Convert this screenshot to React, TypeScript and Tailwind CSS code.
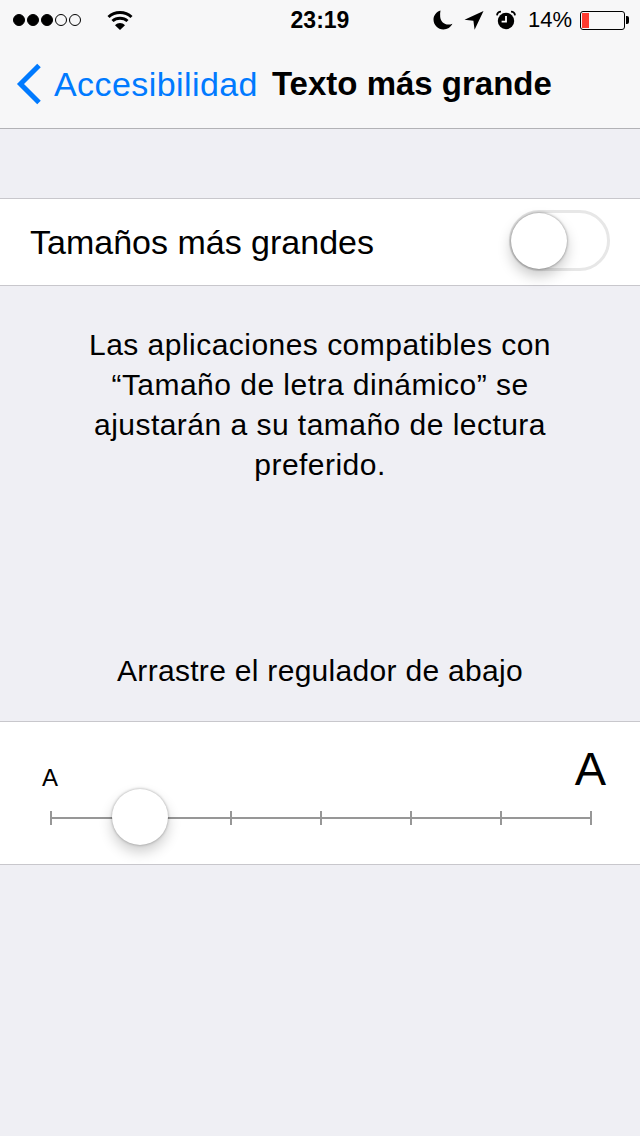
import React from 'react';

const ticks = [0, 1, 2, 3, 4, 5, 6];

function Signal() {
    return (
        <div className="flex items-center gap-[2px]">
            <span className="w-[12px] h-[12px] rounded-full bg-black border border-black" />
            <span className="w-[12px] h-[12px] rounded-full bg-black border border-black" />
            <span className="w-[12px] h-[12px] rounded-full bg-black border border-black" />
            <span className="w-[12px] h-[12px] rounded-full border border-black" />
            <span className="w-[12px] h-[12px] rounded-full border border-black" />
        </div>
    );
}

function Wifi() {
    return (
        <svg width="26" height="20" viewBox="0 0 26 20" fill="none">
            <path d="M1.5 7C7.8 1 18.2 1 24.5 7" stroke="#000" strokeWidth="3" />
            <path d="M5.5 11C9.6 7.2 16.4 7.2 20.5 11" stroke="#000" strokeWidth="3" />
            <path d="M8 15.2L13 20L18 15.2C15 12.4 11 12.4 8 15.2Z" fill="#000" />
        </svg>
    );
}

function Moon() {
    return (
        <svg width="20" height="20" viewBox="0 0 20 20">
            <path d="M7.5 0.5C3.5 1.8 0.5 5.2 0.5 9.6C0.5 15.2 5 19.5 10.4 19.5C14.4 19.5 17.8 17.2 19.4 13.8C18 14.4 16.6 14.6 15.4 14.6C11 14.6 7.6 11.4 7.2 7C7 4.6 7.1 2.4 7.5 0.5Z" fill="#000" />
        </svg>
    );
}

function LocationArrow() {
    return (
        <svg width="20" height="20" viewBox="0 0 20 20">
            <path d="M19.5 1L0.5 9.8L9.4 10.8L10.6 19.8Z" fill="#000" />
        </svg>
    );
}

function Alarm() {
    return (
        <svg width="20" height="20" viewBox="0 0 20 20">
            <circle cx="10" cy="11" r="8.2" fill="#000" />
            <path d="M10 6V11.6H5.6" stroke="#fff" strokeWidth="1.8" fill="none" />
            <path d="M1 5.4C1.2 3.2 3 1.6 5 1.6" stroke="#000" strokeWidth="1.8" fill="none" />
            <path d="M19 5.4C18.8 3.2 17 1.6 15 1.6" stroke="#000" strokeWidth="1.8" fill="none" />
        </svg>
    );
}

function Battery() {
    return (
        <div className="flex items-center">
            <div className="w-[45px] h-[19px] rounded-[3px] border border-black p-[1px] flex">
                <div className="w-[7px] bg-[#ff3b30]" />
            </div>
            <div className="w-[3px] h-[8px] ml-[1px] bg-black rounded-r-[2px]" />
        </div>
    );
}

export default function App() {
    return (
        <div
            className="w-[640px] h-[1136px] bg-[#efeff4] text-black overflow-hidden"
            style={{ fontFamily: '"Liberation Sans", Arial, sans-serif' }}
        >
            {/* Status bar + nav */}
            <header className="h-[129px] bg-[#f7f7f8] border-b border-[#b2b2b6]">
                <div className="relative h-[40px] flex items-center pl-[13px] pr-[11px]">
                    <Signal />
                    <div className="ml-[26px]">
                        <Wifi />
                    </div>
                    <div className="absolute left-0 right-0 text-center text-[23px] leading-[40px] font-bold">
                        23:19
                    </div>
                    <div className="ml-auto flex items-center">
                        <Moon />
                        <div className="ml-[11px]">
                            <LocationArrow />
                        </div>
                        <div className="ml-[12px]">
                            <Alarm />
                        </div>
                        <span className="ml-[12px] text-[22px] leading-[40px]">14%</span>
                        <div className="ml-[8px]">
                            <Battery />
                        </div>
                    </div>
                </div>
                <div className="h-[88px] flex items-center pl-[16px]">
                    <svg width="26" height="42" viewBox="0 0 26 42" fill="none">
                        <path d="M23 2.5L4.5 21L23 39.5" stroke="#007aff" strokeWidth="5" />
                    </svg>
                    <span className="ml-[12px] text-[34px] tracking-[0.42px] text-[#007aff]">Accesibilidad</span>
                    <span className="ml-[14px] text-[33px] font-bold">Texto más grande</span>
                </div>
            </header>

            {/* Toggle row */}
            <section className="mt-[69px] h-[88px] bg-white border-y border-[#c8c7cc] flex items-center justify-between pl-[30px] pr-[30px]">
                <span className="text-[34px]">Tamaños más grandes</span>
                <div className="relative w-[101px] h-[61px] mb-[3px] rounded-full border-[3px] border-[#e7e7e7]">
                    <div className="absolute left-[-1px] top-0 w-[56px] h-[56px] rounded-full bg-white shadow-[0_7px_14px_rgba(0,0,0,0.22),0_0_3px_rgba(0,0,0,0.45)]" />
                </div>
            </section>

            {/* Description */}
            <p className="mt-[39px] px-[60px] text-center text-[30px] tracking-[0.47px] leading-[40px]">
                Las aplicaciones compatibles con “Tamaño de letra dinámico” se ajustarán a su tamaño de lectura preferido.
            </p>

            <p className="mt-[166px] text-center text-[30px] tracking-[0.3px] leading-[40px]">
                Arrastre el regulador de abajo
            </p>

            {/* Text size slider */}
            <section className="mt-[30px] h-[144px] bg-white border-y border-[#c8c7cc] pl-[42px] pr-[34px]">
                <div className="flex items-end justify-between h-[69px]">
                    <span className="text-[24px] leading-[28px] mb-[-1px]">A</span>
                    <span className="text-[47px] leading-[56px] mb-[-6px]">A</span>
                </div>
                <div className="relative mt-[26px] ml-[8px] w-[542px] h-[2px] bg-[#979797]">
                    <div className="absolute inset-0 flex justify-between items-center">
                        {ticks.map((t) => (
                            <span key={t} className="w-[2px] h-[14px] bg-[#979797]" />
                        ))}
                    </div>
                    <div className="absolute left-[62px] top-[-28px] w-[56px] h-[56px] rounded-full bg-white shadow-[0_7px_14px_rgba(0,0,0,0.2),0_0_3px_rgba(0,0,0,0.35)]" />
                </div>
            </section>
        </div>
    );
}
